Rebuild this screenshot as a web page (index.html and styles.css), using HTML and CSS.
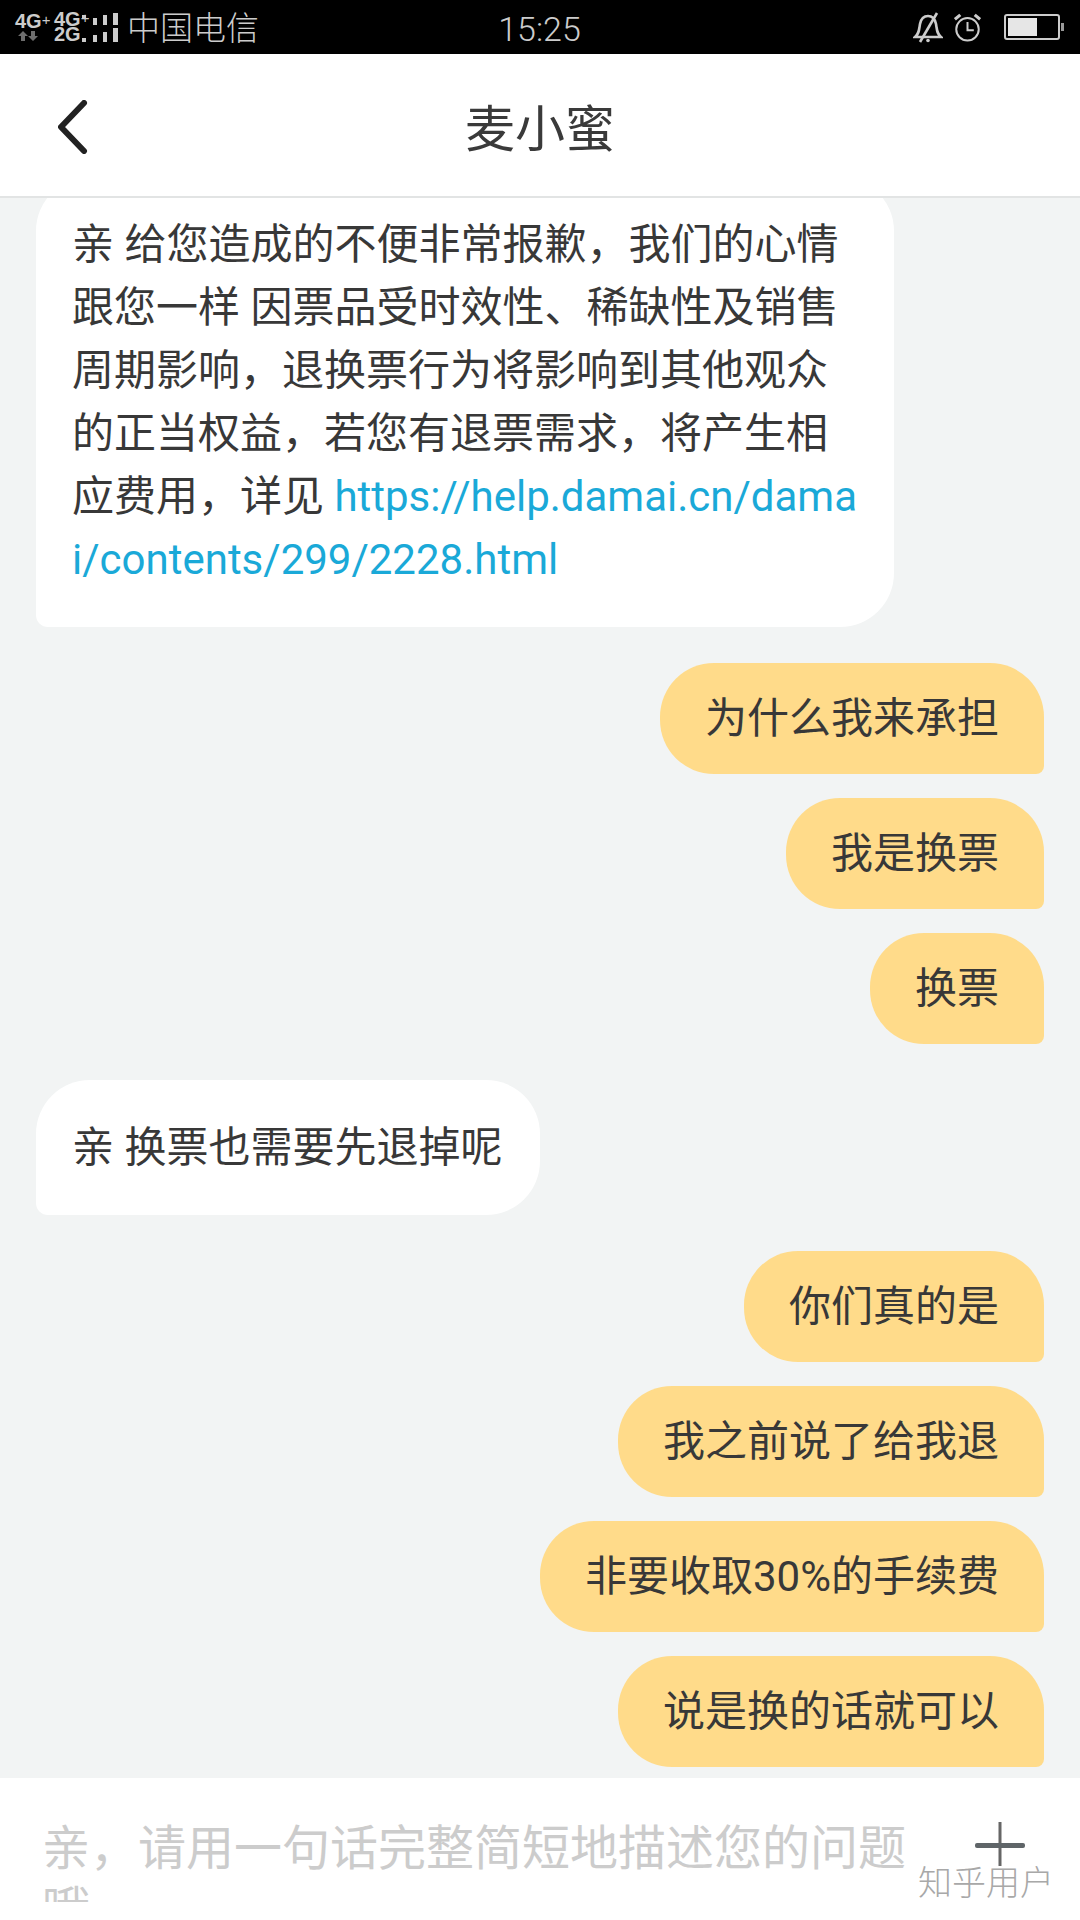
FILE: index.html
```html
<!DOCTYPE html>
<html lang="zh-CN">
<head>
    <meta charset="UTF-8">
    <meta name="viewport" content="width=device-width, initial-scale=1.0">
    <title>麦小蜜</title>
    <link rel="stylesheet" href="styles.css">
</head>
<body>
    <div class="phone">
        <div class="status-bar">
            <div class="status-left">
                <div class="net net-one">
                    <span>4G<sup>+</sup></span>
                    <svg class="arrows" width="20" height="10" viewBox="0 0 20 10">
                        <path d="M5 0l5 5H7v5H3V5H0z" fill="#6e6e6e"/>
                        <path d="M15 10l5-5h-3V0h-4v5h-3z" fill="#6e6e6e"/>
                    </svg>
                </div>
                <div class="net net-two">
                    <span>4G<sup>+</sup></span>
                    <span>2G</span>
                </div>
                <svg class="signal" width="36" height="34" viewBox="0 0 36 34">
                    <g fill="#ccc">
                        <rect x="0" y="5" width="4" height="3"/>
                        <rect x="0" y="28" width="4" height="4"/>
                        <rect x="11" y="8" width="4" height="7"/>
                        <rect x="11" y="25" width="4" height="7"/>
                        <rect x="21" y="5" width="4" height="10"/>
                        <rect x="21" y="22" width="4" height="10"/>
                        <rect x="31" y="3" width="5" height="12"/>
                        <rect x="31" y="18" width="5" height="14"/>
                    </g>
                </svg>
                <span class="carrier">中国电信</span>
            </div>
            <div class="status-time">15:25</div>
            <div class="status-right">
                <svg class="bell" width="30" height="32" viewBox="0 0 30 32" fill="none" stroke="#ccc" stroke-width="2.6">
                    <path d="M2 26c4-3 4-7 5-13 1-5 4-8 8-8s7 3 8 8c1 6 1 10 5 13z"/>
                    <path d="M24 2L7 31"/>
                    <circle cx="15" cy="29.5" r="1.8" fill="#ccc" stroke="none"/>
                </svg>
                <svg class="alarm" width="27" height="29" viewBox="0 0 30 32" fill="none" stroke="#ccc" stroke-width="2.2">
                    <circle cx="15" cy="18" r="12.5"/>
                    <path d="M15 10v9h7"/>
                    <path d="M1 7l6-5M29 7l-6-5" stroke-width="3.5"/>
                </svg>
                <div class="battery"><div class="battery-fill"></div></div>
                <div class="battery-tip"></div>
            </div>
        </div>

        <div class="top-bar">
            <svg class="back" width="30" height="54" viewBox="0 0 30 54" fill="none" stroke="#222" stroke-width="6" stroke-linecap="round" stroke-linejoin="round">
                <path d="M26 3L3 27l23 24"/>
            </svg>
            <div class="top-title">麦小蜜</div>
        </div>

        <div class="chat">
            <div class="chat-list">
                <div class="msg msg-in msg-long">亲 给您造成的不便非常报歉，我们的心情跟您一样 因票品受时效性、稀缺性及销售周期影响，退换票行为将影响到其他观众的正当权益，若您有退票需求，将产生相应费用，详见 <a class="link" href="#">https://help.damai.cn/damai/contents/299/2228.html</a></div>
                <div class="group">
                    <div class="msg msg-out">为什么我来承担</div>
                    <div class="msg msg-out">我是换票</div>
                    <div class="msg msg-out">换票</div>
                </div>
                <div class="msg msg-in">亲 换票也需要先退掉呢</div>
                <div class="group">
                    <div class="msg msg-out">你们真的是</div>
                    <div class="msg msg-out">我之前说了给我退</div>
                    <div class="msg msg-out">非要收取30%的手续费</div>
                    <div class="msg msg-out">说是换的话就可以</div>
                </div>
            </div>
        </div>

        <div class="input-bar">
            <div class="input-text">亲，请用一句话完整简短地描述您的问题哦~</div>
            <svg class="plus" width="50" height="44" viewBox="0 0 50 44">
                <rect x="23.5" y="0" width="3" height="44" fill="#666"/>
                <rect x="0" y="21" width="50" height="5" rx="2" fill="#5f6568"/>
            </svg>
        </div>
        <div class="watermark">知乎用户</div>
    </div>
</body>
</html>
```

FILE: styles.css
```css
* {
    box-sizing: border-box;
}
body {
    margin: 0;
    padding: 0;
    background-color: #f2f4f4;
    font-family: Roboto, "Noto Sans CJK SC", sans-serif;
    color: #383838;
}
.phone {
    position: relative;
    width: 1080px;
    height: 1920px;
    display: flex;
    flex-direction: column;
    overflow: hidden;
}

/* status bar */
.status-bar {
    height: 54px;
    flex-shrink: 0;
    background-color: #000;
    color: #ccc;
    display: grid;
    grid-template-columns: 1fr auto 1fr;
    align-items: center;
    padding: 0 16px 0 15px;
}
.status-left {
    display: flex;
    align-items: center;
}
.net {
    display: flex;
    flex-direction: column;
    font-family: "Liberation Sans", sans-serif;
    font-size: 20px;
    font-weight: bold;
    line-height: 15px;
    color: #ccc;
}
.net sup {
    font-size: 15px;
    font-weight: normal;
    line-height: 0;
    vertical-align: 3px;
}
.net-one {
    width: 39px;
    align-items: flex-start;
}
.arrows {
    margin: 2px 0 0 3px;
}
.net-two {
    width: 28px;
    white-space: nowrap;
}
.carrier {
    margin-left: 9px;
    height: 54px;
    font-size: 33px;
    line-height: 58px;
    font-weight: 300;
}
.status-time {
    height: 54px;
    font-size: 34px;
    font-weight: 300;
    line-height: 58px;
}
.status-right {
    display: flex;
    align-items: center;
    justify-content: flex-end;
}
.alarm {
    margin-left: 11px;
}
.battery {
    margin-left: 23px;
    width: 56px;
    height: 26px;
    border: 2px solid #ccc;
    border-radius: 3px;
    padding: 2px;
}
.battery-fill {
    width: 60%;
    height: 100%;
    background-color: #e6e6e6;
}
.battery-tip {
    margin-left: 1px;
    width: 3px;
    height: 8px;
    background-color: #999;
}

/* title */
.top-bar {
    position: relative;
    height: 144px;
    flex-shrink: 0;
    background-color: #fff;
    border-bottom: 2px solid #e2e4e4;
    display: flex;
    align-items: center;
    justify-content: center;
}
.back {
    position: absolute;
    left: 58px;
    top: 46px;
}
.top-title {
    font-size: 50px;
    color: #3a3a3a;
}

/* messages */
.chat {
    flex: 1;
    min-height: 0;
    overflow: hidden;
}
.chat-list {
    margin-top: -21px;
    padding: 0 36px;
    display: flex;
    flex-direction: column;
    gap: 36px;
}
.group {
    display: flex;
    flex-direction: column;
    align-items: flex-end;
    gap: 24px;
}
.msg {
    font-size: 42px;
    line-height: 63px;
    border-radius: 54px;
}
.msg-in {
    align-self: flex-start;
    max-width: 858px;
    padding: 36px 38px 36px 36px;
    background-color: #fff;
    border-bottom-left-radius: 12px;
    word-break: break-all;
}
.msg-long {
    padding-right: 34px;
}
.msg-out {
    padding: 24px 45px;
    background-color: #ffdb8a;
    border-bottom-right-radius: 8px;
}
.link {
    color: #1aa9d8;
    text-decoration: none;
}

/* input */
.input-bar {
    height: 142px;
    flex-shrink: 0;
    background-color: #fff;
    display: flex;
    align-items: flex-start;
    padding: 40px 55px 18px 42px;
}
.input-text {
    width: 881px;
    height: 84px;
    overflow: hidden;
    font-size: 48px;
    line-height: 61px;
    color: #ccc;
}
.plus {
    margin: 4px 0 0 53px;
    flex-shrink: 0;
}
.watermark {
    position: absolute;
    left: 918px;
    top: 1864px;
    font-size: 34px;
    line-height: 38px;
    font-weight: 300;
    color: #a8a8a8;
}
```
